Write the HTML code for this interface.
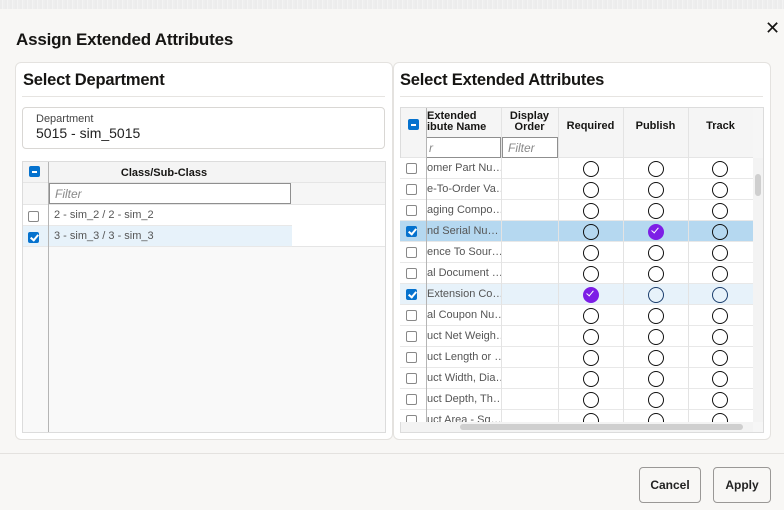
<!DOCTYPE html>
<html><head><meta charset="utf-8"><style>
*{box-sizing:border-box;margin:0;padding:0}
body{width:784px;height:510px;background:#f8f7f5;font-family:"Liberation Sans",sans-serif;position:relative;overflow:hidden;color:#161513}
.a{position:absolute}
.strip{left:0;top:0;width:784px;height:9px;background:repeating-linear-gradient(90deg,#ececec 0 2px,#f3f3f3 2px 3px,#eeeeee 3px 5px)}
h1{position:absolute;left:16px;top:30px;font-size:17px;font-weight:bold;letter-spacing:-0.2px}
.panel{background:#fff;border:1px solid #e4e2df;border-radius:6px}
h2{position:absolute;font-size:16.5px;font-weight:bold;letter-spacing:-0.2px}
.cb{position:absolute;width:11px;height:11px;border:1px solid #888;border-radius:2px;background:#fff}
.cb.on{background:#0572ce;border-color:#0572ce}
.cb.on:after{content:"";position:absolute;left:3px;top:0px;width:3px;height:6px;border:solid #fff;border-width:0 2px 2px 0;transform:rotate(40deg)}
.cb.ind{background:#0572ce;border-color:#0572ce}
.cb.ind:after{content:"";position:absolute;left:2px;top:4px;width:5px;height:2px;background:#fff}
.th{font-size:11px;font-weight:bold;text-align:center;line-height:11px}
.row{position:absolute;left:400px;width:353px;height:21px;border-bottom:1px solid #e8e8e8;background:#fff}
.row .t{position:absolute;left:27px;top:4px;font-size:11px;color:#555;white-space:nowrap;width:74px;overflow:hidden}
.row .c{position:absolute;top:3px;width:16px;height:16px;border:1.6px solid #111;border-radius:50%}
.row .cb{left:6px;top:5px}
.p{background:#7d1ee6!important;border-color:#7d1ee6!important}
.p:after{content:"";position:absolute;left:4px;top:1px;width:3px;height:6px;border:solid #fff;border-width:0 1.5px 1.5px 0;transform:rotate(40deg)}
.dk{border-color:#1c3f6e!important}
.vl{position:absolute;width:1px;background:#e3e3e3}
.btn{position:absolute;border:1px solid #9a9896;border-radius:4px;background:#f8f7f5;font-size:12px;font-weight:bold;text-align:center;line-height:34px;color:#222}
</style></head><body>
<div class="a strip"></div>
<h1>Assign Extended Attributes</h1>
<div class="a" style="left:765px;top:19px;font-size:18px;line-height:18px">✕</div>

<div class="a panel" style="left:15px;top:62px;width:378px;height:378px"></div>
<h2 style="left:23px;top:71px">Select Department</h2>
<div class="a" style="left:22px;top:96px;width:363px;height:1px;background:#e6e4e1"></div>
<div class="a" style="left:22px;top:107px;width:363px;height:42px;border:1px solid #d9d7d4;border-radius:4px"></div>
<div class="a" style="left:36px;top:113px;font-size:11px;color:#444">Department</div>
<div class="a" style="left:36px;top:125px;font-size:14px;color:#222">5015 - sim_5015</div>

<div class="a" style="left:22px;top:161px;width:364px;height:272px;border:1px solid #dcdcdc;background:#f9f9f9"></div>
<div class="a" style="left:23px;top:162px;width:362px;height:21px;background:#f4f4f4;border-bottom:1px solid #e5e5e5"></div>
<div class="a" style="left:23px;top:183px;width:362px;height:22px;background:#f6f6f6;border-bottom:1px solid #e5e5e5"></div>
<div class="a" style="left:23px;top:205px;width:269px;height:21px;background:#fff;border-bottom:1px solid #e8e8e8"></div>
<div class="a" style="left:23px;top:226px;width:269px;height:21px;background:#e7f2fa;border-bottom:1px solid #e8e8e8"></div>
<div class="a" style="left:292px;top:205px;width:93px;height:42px;background:#fff;border-bottom:1px solid #e5e5e5"></div>
<div class="a" style="left:48px;top:162px;width:1px;height:270px;background:#b5b5b5"></div>
<div class="cb ind" style="left:29px;top:166px"></div>
<div class="a th" style="left:49px;top:168px;width:230px">Class/Sub-Class</div>
<div class="a" style="left:49px;top:183px;width:242px;height:21px;border:1px solid #8f8f8f;background:#fff;font-size:12px;font-style:italic;color:#888;padding:3px 5px">Filter</div>
<div class="cb" style="left:28px;top:211px"></div>
<div class="a" style="left:54px;top:209px;font-size:11px;color:#555">2 - sim_2 / 2 - sim_2</div>
<div class="cb on" style="left:28px;top:232px"></div>
<div class="a" style="left:54px;top:230px;font-size:11px;color:#555">3 - sim_3 / 3 - sim_3</div>

<div class="a panel" style="left:393px;top:62px;width:378px;height:378px"></div>
<h2 style="left:400px;top:71px">Select Extended Attributes</h2>
<div class="a" style="left:400px;top:96px;width:363px;height:1px;background:#e6e4e1"></div>
<div class="a" style="left:400px;top:107px;width:364px;height:326px;border:1px solid #dcdcdc;background:#f6f6f6"></div>
<div class="a" style="left:401px;top:108px;width:352px;height:29px;background:#f5f5f5"></div>
<div class="a" style="left:401px;top:137px;width:352px;height:21px;background:#f5f5f5;border-bottom:1px solid #e5e5e5"></div>
<div class="cb ind" style="left:408px;top:119px"></div>
<div class="a th" style="left:427px;top:111px;width:60px;text-align:left">Extended<br>ibute Name</div>
<div class="a th" style="left:501px;top:111px;width:57px">Display<br>Order</div>
<div class="a th" style="left:558px;top:121px;width:65px">Required</div>
<div class="a th" style="left:623px;top:121px;width:65px">Publish</div>
<div class="a th" style="left:688px;top:121px;width:65px">Track</div>
<div class="a" style="left:426px;top:137px;width:75px;height:21px;border:1px solid #8f8f8f;background:#fff;font-size:12px;font-style:italic;color:#888;padding:3px 2px">r</div>
<div class="a" style="left:502px;top:137px;width:56px;height:21px;border:1px solid #8f8f8f;background:#fff;font-size:12px;font-style:italic;color:#888;padding:3px 5px">Filter</div>

<div class="row" style="top:158px"><div class="cb"></div><div class="t">omer Part Nu…</div><div class="c" style="left:183px"></div><div class="c" style="left:248px"></div><div class="c" style="left:312px"></div></div>
<div class="row" style="top:179px"><div class="cb"></div><div class="t">e-To-Order Va…</div><div class="c" style="left:183px"></div><div class="c" style="left:248px"></div><div class="c" style="left:312px"></div></div>
<div class="row" style="top:200px"><div class="cb"></div><div class="t">aging Compo…</div><div class="c" style="left:183px"></div><div class="c" style="left:248px"></div><div class="c" style="left:312px"></div></div>
<div class="row" style="top:221px;background:#b5d8f0"><div class="cb on"></div><div class="t">nd Serial Nu…</div><div class="c" style="left:183px"></div><div class="c p" style="left:248px"></div><div class="c" style="left:312px"></div></div>
<div class="row" style="top:242px"><div class="cb"></div><div class="t">ence To Sour…</div><div class="c" style="left:183px"></div><div class="c" style="left:248px"></div><div class="c" style="left:312px"></div></div>
<div class="row" style="top:263px"><div class="cb"></div><div class="t">al Document …</div><div class="c" style="left:183px"></div><div class="c" style="left:248px"></div><div class="c" style="left:312px"></div></div>
<div class="row" style="top:284px;background:#e7f2fa"><div class="cb on"></div><div class="t">Extension Co…</div><div class="c p" style="left:183px"></div><div class="c dk" style="left:248px"></div><div class="c dk" style="left:312px"></div></div>
<div class="row" style="top:305px"><div class="cb"></div><div class="t">al Coupon Nu…</div><div class="c" style="left:183px"></div><div class="c" style="left:248px"></div><div class="c" style="left:312px"></div></div>
<div class="row" style="top:326px"><div class="cb"></div><div class="t">uct Net Weigh…</div><div class="c" style="left:183px"></div><div class="c" style="left:248px"></div><div class="c" style="left:312px"></div></div>
<div class="row" style="top:347px"><div class="cb"></div><div class="t">uct Length or …</div><div class="c" style="left:183px"></div><div class="c" style="left:248px"></div><div class="c" style="left:312px"></div></div>
<div class="row" style="top:368px"><div class="cb"></div><div class="t">uct Width, Dia…</div><div class="c" style="left:183px"></div><div class="c" style="left:248px"></div><div class="c" style="left:312px"></div></div>
<div class="row" style="top:389px"><div class="cb"></div><div class="t">uct Depth, Th…</div><div class="c" style="left:183px"></div><div class="c" style="left:248px"></div><div class="c" style="left:312px"></div></div>
<div class="row" style="top:410px;height:12px;overflow:hidden;border:0"><div class="cb"></div><div class="t">uct Area - Sq…</div><div class="c" style="left:183px"></div><div class="c" style="left:248px"></div><div class="c" style="left:312px"></div></div>

<div class="vl" style="left:426px;top:108px;height:314px;background:#b5b5b5"></div>
<div class="vl" style="left:501px;top:108px;height:314px"></div>
<div class="vl" style="left:558px;top:108px;height:314px"></div>
<div class="vl" style="left:623px;top:108px;height:314px"></div>
<div class="vl" style="left:688px;top:108px;height:314px"></div>
<div class="a" style="left:753px;top:158px;width:10px;height:264px;background:#f3f3f3"></div>
<div class="a" style="left:755px;top:174px;width:6px;height:22px;background:#cfcfcf;border-radius:3px"></div>
<div class="a" style="left:401px;top:422px;width:352px;height:10px;background:#f3f3f3"></div>
<div class="a" style="left:460px;top:424px;width:283px;height:6px;background:#cfcfcf;border-radius:3px"></div>

<div class="a" style="left:0;top:453px;width:784px;height:1px;background:#e4e2df"></div>
<div class="btn" style="left:639px;top:467px;width:62px;height:36px">Cancel</div>
<div class="btn" style="left:713px;top:467px;width:58px;height:36px">Apply</div>
</body></html>
